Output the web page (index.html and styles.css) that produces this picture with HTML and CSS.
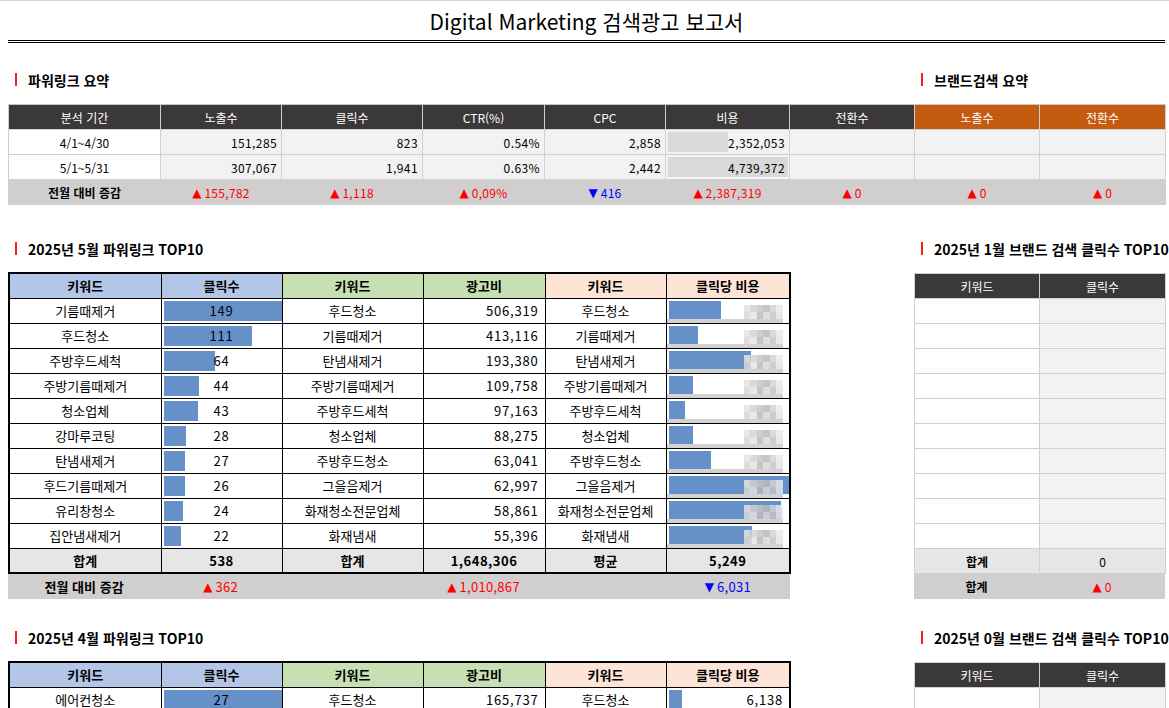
FILE: index.html
```html
<!DOCTYPE html>
<html lang="ko">
<head>
<meta charset="utf-8">
<title>Digital Marketing 검색광고 보고서</title>
<link rel="stylesheet" href="styles.css">
</head>
<body>
<div class="sheet">
  <h1 class="title">Digital Marketing 검색광고 보고서</h1>

  <div class="split heads1">
    <div class="lcol"><div class="sec-head">파워링크 요약</div></div>
    <div class="rcol"><div class="sec-head">브랜드검색 요약</div></div>
  </div>

  <table class="summary">
    <colgroup>
      <col class="w152"><col class="w121"><col class="w141"><col class="w122"><col class="w121"><col class="w124"><col class="w125"><col class="w125"><col class="w126">
    </colgroup>
    <thead>
      <tr><th>분석 기간</th><th>노출수</th><th>클릭수</th><th>CTR(%)</th><th>CPC</th><th>비용</th><th>전환수</th><th class="org">노출수</th><th class="org">전환수</th></tr>
    </thead>
    <tbody>
      <tr><td class="c wh">4/1~4/30</td><td class="r">151,285</td><td class="r">823</td><td class="r">0.54%</td><td class="r">2,858</td><td class="r gbar" style="--w:60px">2,352,053</td><td></td><td></td><td></td></tr>
      <tr><td class="c wh">5/1~5/31</td><td class="r">307,067</td><td class="r">1,941</td><td class="r">0.63%</td><td class="r">2,442</td><td class="r gbar" style="--w:120px">4,739,372</td><td></td><td></td><td></td></tr>
      <tr class="delta"><td class="b">전월 대비 증감</td><td class="up"><span class="tri">▲</span>155,782</td><td class="up"><span class="tri">▲</span>1,118</td><td class="up"><span class="tri">▲</span>0,09%</td><td class="dn"><span class="tri">▼</span>416</td><td class="up"><span class="tri">▲</span>2,387,319</td><td class="up"><span class="tri">▲</span>0</td><td class="up"><span class="tri">▲</span>0</td><td class="up"><span class="tri">▲</span>0</td></tr>
    </tbody>
  </table>

  <div class="split block2">
    <div class="lcol">
      <div class="sec-head">2025년 5월 파워링크 TOP10</div>
      <table class="top">
        <colgroup><col class="w152"><col class="w121"><col class="w141"><col class="w122"><col class="w121"><col class="w124"></colgroup>
        <thead>
          <tr><th class="blue">키워드</th><th class="blue">클릭수</th><th class="green">키워드</th><th class="green">광고비</th><th class="peach">키워드</th><th class="peach">클릭당 비용</th></tr>
        </thead>
        <tbody>
          <tr><td>기름때제거</td><td class="bar" style="--w:118px">149</td><td>후드청소</td><td class="r">506,319</td><td>후드청소</td><td class="blur" style="--w:52px"></td></tr>
          <tr><td>후드청소</td><td class="bar" style="--w:88px">111</td><td>기름때제거</td><td class="r">413,116</td><td>기름때제거</td><td class="blur" style="--w:29px"></td></tr>
          <tr><td>주방후드세척</td><td class="bar" style="--w:51px">64</td><td>탄냄새제거</td><td class="r">193,380</td><td>탄냄새제거</td><td class="blur" style="--w:82px"></td></tr>
          <tr><td>주방기름때제거</td><td class="bar" style="--w:35px">44</td><td>주방기름때제거</td><td class="r">109,758</td><td>주방기름때제거</td><td class="blur" style="--w:24px"></td></tr>
          <tr><td>청소업체</td><td class="bar" style="--w:34px">43</td><td>주방후드세척</td><td class="r">97,163</td><td>주방후드세척</td><td class="blur" style="--w:16px"></td></tr>
          <tr><td>강마루코팅</td><td class="bar" style="--w:22px">28</td><td>청소업체</td><td class="r">88,275</td><td>청소업체</td><td class="blur" style="--w:24px"></td></tr>
          <tr><td>탄냄새제거</td><td class="bar" style="--w:21px">27</td><td>주방후드청소</td><td class="r">63,041</td><td>주방후드청소</td><td class="blur" style="--w:42px"></td></tr>
          <tr><td>후드기름때제거</td><td class="bar" style="--w:21px">26</td><td>그을음제거</td><td class="r">62,997</td><td>그을음제거</td><td class="blur" style="--w:122px"></td></tr>
          <tr><td>유리창청소</td><td class="bar" style="--w:19px">24</td><td>화재청소전문업체</td><td class="r">58,861</td><td>화재청소전문업체</td><td class="blur" style="--w:112px"></td></tr>
          <tr><td>집안냄새제거</td><td class="bar" style="--w:17px">22</td><td>화재냄새</td><td class="r">55,396</td><td>화재냄새</td><td class="blur" style="--w:83px"></td></tr>
          <tr class="total"><td>합계</td><td class="n">538</td><td>합계</td><td class="n">1,648,306</td><td>평균</td><td class="n">5,249</td></tr>
        </tbody>
      </table>
      <table class="delta-tbl">
        <colgroup><col class="w152"><col class="w121"><col class="w141"><col class="w122"><col class="w121"><col class="w124"></colgroup>
        <tr><td class="b">전월 대비 증감</td><td class="up n"><span class="tri">▲</span>362</td><td></td><td class="up n"><span class="tri">▲</span>1,010,867</td><td></td><td class="dn n"><span class="tri">▼</span>6,031</td></tr>
      </table>
    </div>
    <div class="rcol">
      <div class="sec-head">2025년 1월 브랜드 검색 클릭수 TOP10</div>
      <table class="brand">
        <colgroup><col class="w125"><col class="w126"></colgroup>
        <thead><tr><th>키워드</th><th>클릭수</th></tr></thead>
        <tbody>
          <tr><td></td><td></td></tr>
          <tr><td></td><td></td></tr>
          <tr><td></td><td></td></tr>
          <tr><td></td><td></td></tr>
          <tr><td></td><td></td></tr>
          <tr><td></td><td></td></tr>
          <tr><td></td><td></td></tr>
          <tr><td></td><td></td></tr>
          <tr><td></td><td></td></tr>
          <tr><td></td><td></td></tr>
          <tr class="total"><td class="b">합계</td><td>0</td></tr>
        </tbody>
      </table>
      <table class="delta-tbl brand-delta">
        <colgroup><col class="w125"><col class="w126"></colgroup>
        <tr><td class="b">합계</td><td class="up"><span class="tri">▲</span>0</td></tr>
      </table>
    </div>
  </div>

  <div class="split block3">
    <div class="lcol">
      <div class="sec-head">2025년 4월 파워링크 TOP10</div>
      <table class="top">
        <colgroup><col class="w152"><col class="w121"><col class="w141"><col class="w122"><col class="w121"><col class="w124"></colgroup>
        <thead>
          <tr><th class="blue">키워드</th><th class="blue">클릭수</th><th class="green">키워드</th><th class="green">광고비</th><th class="peach">키워드</th><th class="peach">클릭당 비용</th></tr>
        </thead>
        <tbody>
          <tr><td>에어컨청소</td><td class="bar" style="--w:118px">27</td><td>후드청소</td><td class="r">165,737</td><td>후드청소</td><td class="r bar" style="--w:13px">6,138</td></tr>
        </tbody>
      </table>
    </div>
    <div class="rcol">
      <div class="sec-head">2025년 0월 브랜드 검색 클릭수 TOP10</div>
      <table class="brand">
        <colgroup><col class="w125"><col class="w126"></colgroup>
        <thead><tr><th>키워드</th><th>클릭수</th></tr></thead>
        <tbody>
          <tr><td></td><td></td></tr>
        </tbody>
      </table>
    </div>
  </div>
</div>
</body>
</html>
```

FILE: styles.css
```css
html, body {
  margin: 0;
  padding: 0;
  background: #fff;
}
body {
  font-family: "Noto Sans CJK KR", "Noto Sans", sans-serif;
  color: #000;
}
.sheet {
  width: 1169px;
  height: 708px;
  overflow: hidden;
  box-sizing: border-box;
  border-top: 1px solid #d4d4d4;
  padding-left: 8px;
}
.title {
  margin: 0 4px 0 0;
  height: 37px;
  padding-top: 2px;
  line-height: 37px;
  font-size: 21px;
  font-weight: 400;
  text-align: center;
  border-bottom: 3px double #000;
}

.split {
  display: flex;
  align-items: flex-start;
}
.lcol { width: 906px; flex: none; }
.rcol { width: 255px; flex: none; overflow: hidden; white-space: nowrap; }

.sec-head {
  height: 25px;
  display: flex;
  align-items: center;
  font-size: 14px;
  font-weight: 700;
  white-space: nowrap;
  padding-left: 7px;
}
.sec-head::before {
  content: "";
  width: 2px;
  height: 13px;
  background: #ff1a1a;
  margin-right: 11px;
  flex: none;
}
.heads1 { margin-top: 24px; }

table {
  border-collapse: collapse;
  table-layout: fixed;
}
td, th { padding: 0; white-space: nowrap; overflow: hidden; }
.w152 { width: 152px; }
.w121 { width: 121px; }
.w141 { width: 141px; }
.w122 { width: 122px; }
.w124 { width: 124px; }
.w125 { width: 125px; }
.w126 { width: 126px; }

/* summary */
.summary {
  margin-top: 12px;
  width: 1157px;
  font-size: 12px;
}
.summary tr { height: 25px; }
.summary th {
  background: #3a3838;
  color: #fff;
  font-weight: 400;
  border: 1px solid #d0d0d0;
  border-top-color: #c8c8c8;
}
.summary th.org { background: #c55a11; }
.summary td {
  border: 1px solid #d0d0d0;
  background: #f2f2f2;
}
.summary td.wh { background: #fff; }
.c { text-align: center; }
.r { text-align: right; padding-right: 4px; letter-spacing: 0.4px; }
.n { letter-spacing: 0.5px; }
.b { font-weight: 700; }
.summary td.gbar {
  background: linear-gradient(#d9d9d9, #d9d9d9) no-repeat 2px 2px / var(--w) calc(100% - 4px), #f2f2f2;
}
.summary tr.delta td {
  background: #d0cece;
  border-color: #d0cece;
  text-align: center;
}
.up { color: #ff0000; text-align: center; letter-spacing: 0.3px; }
.dn { color: #0000ff; text-align: center; letter-spacing: 0.3px; }
.tri {
  font-family: "DejaVu Sans", sans-serif;
  font-size: 12px;
  margin-right: 3px;
  position: relative;
  top: -1px;
  letter-spacing: 0;
}

/* top10 */
.block2 { margin-top: 31px; }
.block3 { margin-top: 26px; }
.top {
  margin-top: 11px;
  width: 782px;
  font-size: 13px;
  border: 2px solid #000;
}
.top tr { height: 25px; }
.top th {
  font-weight: 700;
  border: 1px solid #000;
}
.top th.blue { background: #b4c6e7; }
.top th.green { background: #c6e0b4; }
.top th.peach { background: #fce4d6; }
.top td {
  border: 1px solid #000;
  text-align: center;
  background: #fff;
}
.top td.r { text-align: right; padding-right: 6px; letter-spacing: 0.8px; }
.top td.bar {
  letter-spacing: 0.8px;
  background: linear-gradient(#6590c8, #6590c8) no-repeat 2px 2px / var(--w) calc(100% - 4px), #fff;
}
.top td.blur {
  background:
    linear-gradient(90deg, rgba(232,226,222,.85) 0 6px, rgba(214,208,210,.85) 6px 13px, rgba(200,196,198,.85) 13px 19px, rgba(183,188,194,.85) 19px 26px, rgba(212,210,216,.85) 26px 32px, rgba(236,234,233,.85) 32px 39px) no-repeat calc(100% - 6px) 6px / 39px 7px,
    linear-gradient(90deg, rgba(220,214,210,.85) 0 6px, rgba(230,228,228,.85) 6px 13px, rgba(190,184,186,.85) 13px 19px, rgba(214,216,220,.85) 19px 26px, rgba(200,194,196,.85) 26px 32px, rgba(226,228,234,.85) 32px 39px) no-repeat calc(100% - 6px) 13px / 39px 7px,
    linear-gradient(#d3d3d3, #d3d3d3) no-repeat 0 100% / calc(100% - 6px) 4px,
    linear-gradient(#6590c8, #6590c8) no-repeat 2px 2px / var(--w) calc(100% - 6px),
    #fff;
}
.top tr.total td {
  background: #e7e6e6;
  font-weight: 700;
}

.delta-tbl {
  width: 782px;
  font-size: 13px;
}
.delta-tbl tr { height: 25px; }
.delta-tbl td {
  background: #d0cece;
  text-align: center;
}

/* brand tables */
.brand {
  margin-top: 12px;
  width: 251px;
  font-size: 12px;
}
.brand tr { height: 25px; }
.brand th {
  background: #3a3838;
  color: #fff;
  font-weight: 400;
  border: 1px solid #d0d0d0;
}
.brand td {
  border: 1px solid #d0d0d0;
  background: #fff;
  text-align: center;
}
.brand td + td { background: #f2f2f2; }
.brand tr.total td { background: #e7e6e6; }
.brand-delta { width: 251px; font-size: 12px; }
```
